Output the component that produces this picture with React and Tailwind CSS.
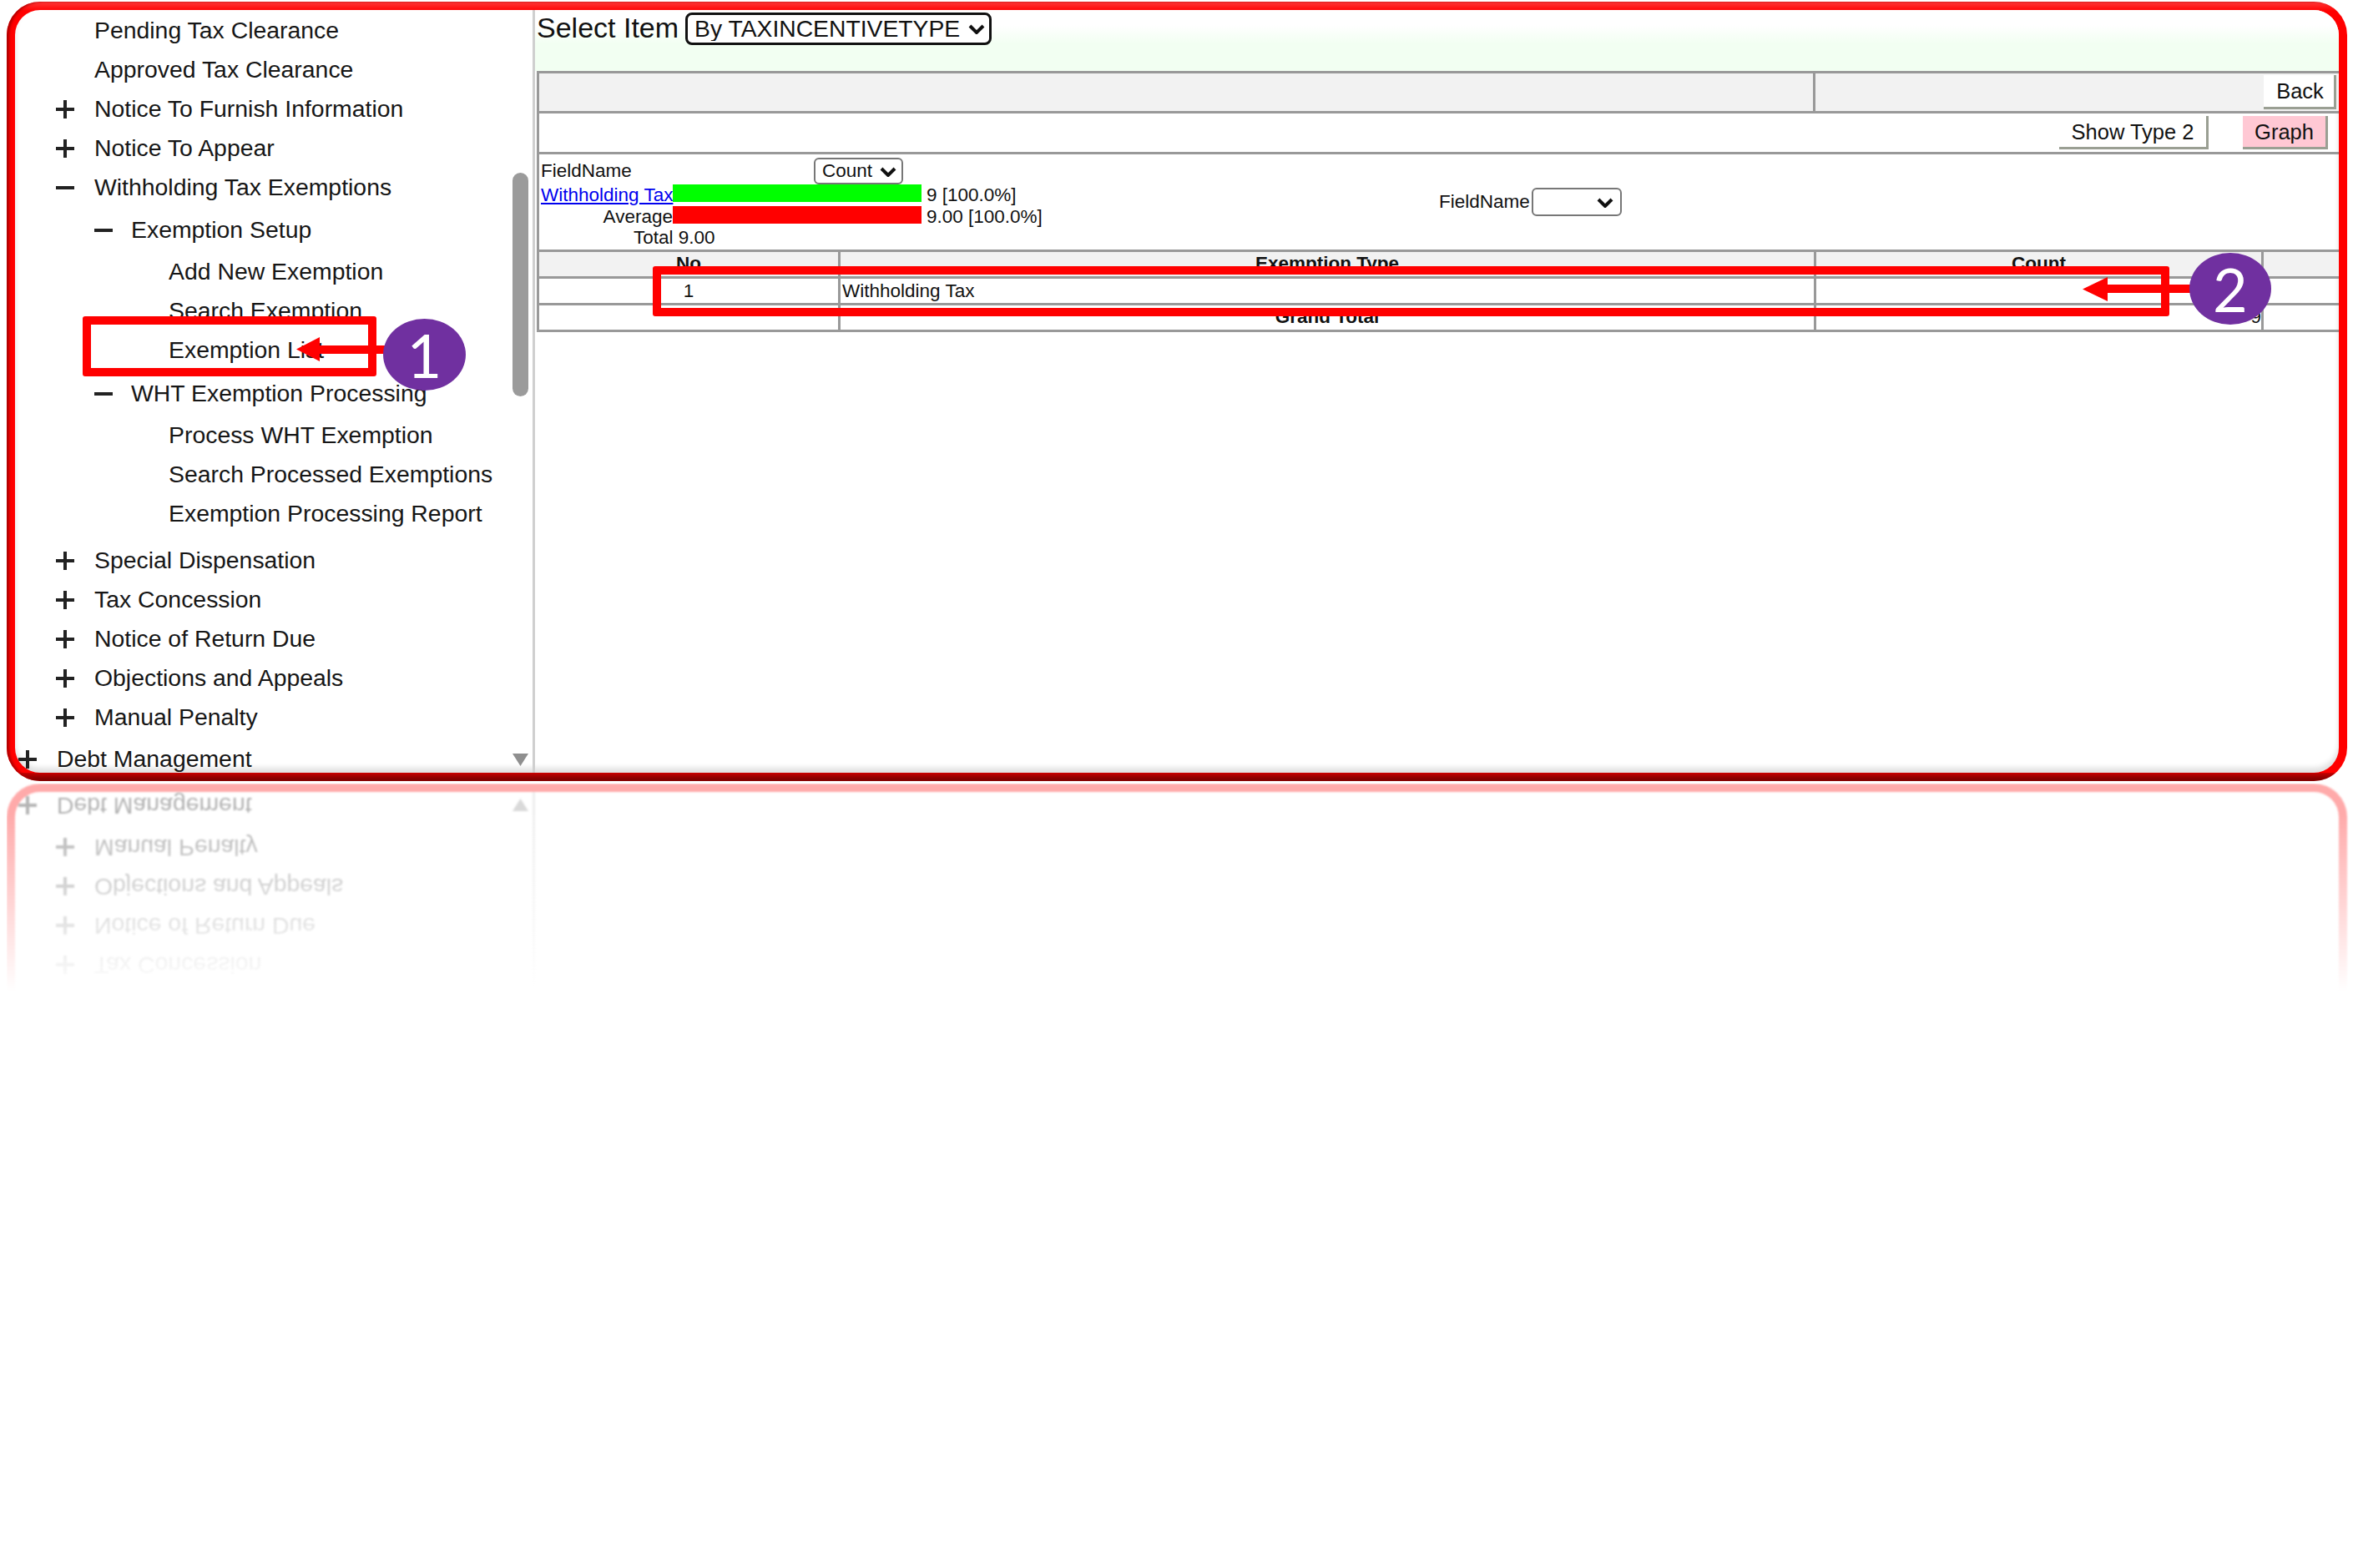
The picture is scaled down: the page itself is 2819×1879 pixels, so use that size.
const menuRows = [
  { label: "Pending Tax Clearance", pad: "pl-[48px]", col: "w-[47px]" },
  { label: "Approved Tax Clearance", pad: "pl-[48px]", col: "w-[47px]" },
  { label: "Notice To Furnish Information", icon: "plus", pad: "pl-[48px]", col: "w-[47px]" },
  { label: "Notice To Appear", icon: "plus", pad: "pl-[48px]", col: "w-[47px]" },
  { label: "Withholding Tax Exemptions", icon: "minus", pad: "pl-[48px]", col: "w-[47px]" },
  { label: "Exemption Setup", icon: "minus", pad: "pl-[94px] mt-[4px]", col: "w-[45px]" },
  { label: "Add New Exemption", pad: "pl-[138px] mt-[3px]", col: "w-[46px]" },
  { label: "Search Exemption", pad: "pl-[138px]", col: "w-[46px]" },
  { label: "Exemption List", pad: "pl-[138px]", col: "w-[46px]" },
  { label: "WHT Exemption Processing", icon: "minus", pad: "pl-[94px] mt-[5px]", col: "w-[45px]" },
  { label: "Process WHT Exemption", pad: "pl-[138px] mt-[3px]", col: "w-[46px]" },
  { label: "Search Processed Exemptions", pad: "pl-[138px]", col: "w-[46px]" },
  { label: "Exemption Processing Report", pad: "pl-[138px]", col: "w-[46px]" },
  { label: "Special Dispensation", icon: "plus", pad: "pl-[48px] mt-[9px]", col: "w-[47px]" },
  { label: "Tax Concession", icon: "plus", pad: "pl-[48px]", col: "w-[47px]" },
  { label: "Notice of Return Due", icon: "plus", pad: "pl-[48px]", col: "w-[47px]" },
  { label: "Objections and Appeals", icon: "plus", pad: "pl-[48px]", col: "w-[47px]" },
  { label: "Manual Penalty", icon: "plus", pad: "pl-[48px]", col: "w-[47px]" },
  { label: "Debt Management", icon: "plus", pad: "pl-[3px] mt-[3px]", col: "w-[47px]" },
];

function TreeIcon({ type }) {
  return (
    <svg width="24" height="24" viewBox="0 0 24 24" fill="#222">
      <rect x="1" y="10" width="22" height="4" />
      {type === "plus" && <rect x="10" y="1" width="4" height="22" />}
    </svg>
  );
}

function Chevron({ className }) {
  return (
    <svg
      className={`pointer-events-none absolute ${className}`}
      width="20"
      height="12"
      viewBox="0 0 20 12"
      fill="none"
      stroke="#111"
      strokeWidth="4"
    >
      <polyline points="2,2 10,10 18,2" />
    </svg>
  );
}

function Sidebar() {
  return (
    <aside className="flex w-[623px] shrink-0 border-r-[3px] border-[#cfcfcf]">
      <div className="flex-1 pt-[1px]">
        {menuRows.map((row) => (
          <div key={row.label} className={`flex h-[47px] items-center ${row.pad}`}>
            <span className={`flex shrink-0 items-center ${row.col}`}>
              {row.icon && <TreeIcon type={row.icon} />}
            </span>
            <span className="whitespace-nowrap text-[28.4px] text-[#161616]">{row.label}</span>
          </div>
        ))}
      </div>

      {/* scrollbar */}
      <div className="mr-[5px] flex w-[19px] shrink-0 flex-col">
        <div className="mt-[195px] h-[268px] rounded-full bg-[#9b9b9b]"></div>
        <svg className="mb-[8px] mt-auto" width="19" height="15" viewBox="0 0 19 15" fill="#8f8f8f">
          <polygon points="0,0 19,0 9.5,15" />
        </svg>
      </div>
    </aside>
  );
}

function ChartBlock() {
  return (
    <div className="flex h-[114px] pl-[2px] text-[22.5px] leading-[26px] text-[#111]">
      <div className="w-[1076px] shrink-0">
        <div className="flex h-[36px] items-center pt-[3px]">
          <span className="w-[327px]">FieldName</span>
          <div className="relative">
            <select className="block h-[32px] w-[107px] appearance-none rounded-[6px] border-2 border-[#777] bg-white pl-[8px] text-[22.5px]">
              <option>Count</option>
            </select>
            <Chevron className="right-[8px] top-[11px]" />
          </div>
        </div>
        <div className="flex h-[26px] items-start">
          <a href="#" className="w-[158px] whitespace-nowrap text-[#0000ee] underline">Withholding Tax</a>
          <div className="h-[21px] w-[298px] bg-[#00ff00]"></div>
          <span className="ml-[6px]">9 [100.0%]</span>
        </div>
        <div className="flex h-[26px] items-start">
          <span className="w-[158px] text-right">Average</span>
          <div className="h-[21px] w-[298px] bg-[#ff0000]"></div>
          <span className="ml-[6px]">9.00 [100.0%]</span>
        </div>
        <div className="pl-[111px] leading-[24px]">Total 9.00</div>
      </div>
      <div className="flex items-center gap-[2px]">
        <span>FieldName</span>
        <div className="relative">
          <select className="block h-[34px] w-[108px] appearance-none rounded-[6px] border-2 border-[#777] bg-white text-[22.5px]">
            <option></option>
          </select>
          <Chevron className="right-[10px] top-[12px]" />
        </div>
      </div>
    </div>
  );
}

function DataTable() {
  const cell = "h-[32px] border-[3px] border-[#999] p-0 text-[22.5px] leading-none text-[#111]";
  return (
    <table className="ml-[2px] w-[2166px] table-fixed border-collapse">
      <colgroup>
        <col className="w-[361px]" />
        <col className="w-[1169px]" />
        <col className="w-[536px]" />
        <col className="w-[100px]" />
      </colgroup>
      <thead className="bg-[#f2f2f2]">
        <tr>
          <th className={cell}>No</th>
          <th className={cell}>Exemption Type</th>
          <th className={cell}>Count</th>
          <th className={cell}></th>
        </tr>
      </thead>
      <tbody>
        <tr>
          <td className={`${cell} pt-[2px] text-center`}>1</td>
          <td className={`${cell} pl-[2px] pt-[2px]`}>Withholding Tax</td>
          <td className={cell}></td>
          <td className={cell}></td>
        </tr>
        <tr>
          <td className={cell}></td>
          <td className={`${cell} text-center font-bold`}>Grand Total</td>
          <td className={`${cell} text-right`}>9</td>
          <td className={cell}></td>
        </tr>
      </tbody>
    </table>
  );
}

function MainPanel() {
  return (
    <main className="min-w-0 flex-1 overflow-hidden">
      <div className="flex h-[73px] items-start gap-[8px] bg-[linear-gradient(to_bottom,#ffffff_25%,#f2fff2_55%)] pl-[2px] pt-[3px] text-[#111]">
        <span className="-mt-[1px] text-[34px] leading-[39px]">Select Item</span>
        <div className="relative">
          <select className="block h-[39px] w-[367px] appearance-none rounded-[8px] border-[3px] border-[#111] bg-white pl-[8px] text-[28.3px] leading-none">
            <option>By TAXINCENTIVETYPE</option>
          </select>
          <Chevron className="right-[8px] top-[14px]" />
        </div>
      </div>

      <div className="ml-[2px] border-l-[3px] border-[#999]">
        <div className="flex h-[51px] border-y-[3px] border-[#999] bg-[#f2f2f2]">
          <div className="w-[1529px] border-r-[3px] border-[#999]"></div>
          <div className="flex flex-1 items-center justify-end pr-[3px]">
            <button className="h-[41px] w-[87px] border-b-[3px] border-r-[3px] border-[#9a9f93] bg-white pl-[3px] text-[25.5px] text-[#111]">Back</button>
          </div>
        </div>
        <div className="flex h-[49px] items-center justify-end gap-[41px] border-b-[3px] border-[#999] pr-[13px] text-[25.5px] text-[#111]">
          <button className="h-[40px] w-[179px] border-b-[3px] border-r-[3px] border-[#9a9f93] bg-white">Show Type 2</button>
          <button className="h-[40px] w-[102px] border-b-[3px] border-r-[3px] border-[#9a9f93] bg-[#ffc8d4]">Graph</button>
        </div>
        <ChartBlock />
      </div>
      <DataTable />
    </main>
  );
}

function Frame({ reflected }) {
  return (
    <div
      className={`h-[934px] w-[2804px] rounded-[40px] p-[10px] ${
        reflected
          ? "bg-[#ff0000]"
          : "bg-[linear-gradient(to_bottom,#ff3a3a_0%,#ff0000_1.2%,#ff0000_98.9%,#c00000_99%,#6f0000_100%)] shadow-[inset_3px_0_3px_#b00000]"
      }`}
    >
      <div
        className={`flex h-full overflow-hidden rounded-[30px] bg-white ${
          reflected ? "" : "shadow-[inset_0_-6px_6px_rgba(0,0,0,0.12)]"
        }`}
      >
        <Sidebar />
        <MainPanel />
      </div>
    </div>
  );
}

function Badge({ className, children }) {
  return (
    <div className={`absolute flex items-center justify-center rounded-[50%] bg-[#7030a0] font-['Lato',sans-serif] text-[72px] leading-none text-white ${className}`}>
      {children}
    </div>
  );
}

export default function App() {
  return (
    <div className="relative h-[1879px] w-[2819px] overflow-hidden bg-white pl-[8px] pt-[2px] font-['Liberation_Sans',Arial,sans-serif]">
      <Frame />

      {/* reflection under the frame */}
      <div
        aria-hidden="true"
        className="mt-[3px] h-[250px] overflow-hidden opacity-[0.33] blur-[1px] [mask-image:linear-gradient(to_bottom,#000_0%,#000_15%,transparent_100%)]"
      >
        <div className="-scale-y-100">
          <Frame reflected />
        </div>
      </div>

      {/* callouts */}
      <div className="absolute left-[99px] top-[379px] h-[72px] w-[352px] rounded-[3px] border-[10px] border-[#ff0000]"></div>
      <svg className="absolute left-[355px] top-[404px]" width="106" height="29" viewBox="0 0 106 29" fill="#ff0000">
        <polygon points="0,14.5 28,0 28,10 106,10 106,20 28,20 28,29" />
      </svg>
      <Badge className="left-[459px] top-[382px] h-[86px] w-[99px]">1</Badge>

      <div className="absolute left-[782px] top-[319px] h-[60px] w-[1817px] rounded-[3px] border-[10px] border-[#ff0000]"></div>
      <svg className="absolute left-[2495px] top-[332px]" width="130" height="29" viewBox="0 0 130 29" fill="#ff0000">
        <polygon points="0,14.5 30,0 30,9 130,9 130,19 30,19 30,29" />
      </svg>
      <Badge className="left-[2623px] top-[303px] h-[86px] w-[98px]">2</Badge>
    </div>
  );
}
